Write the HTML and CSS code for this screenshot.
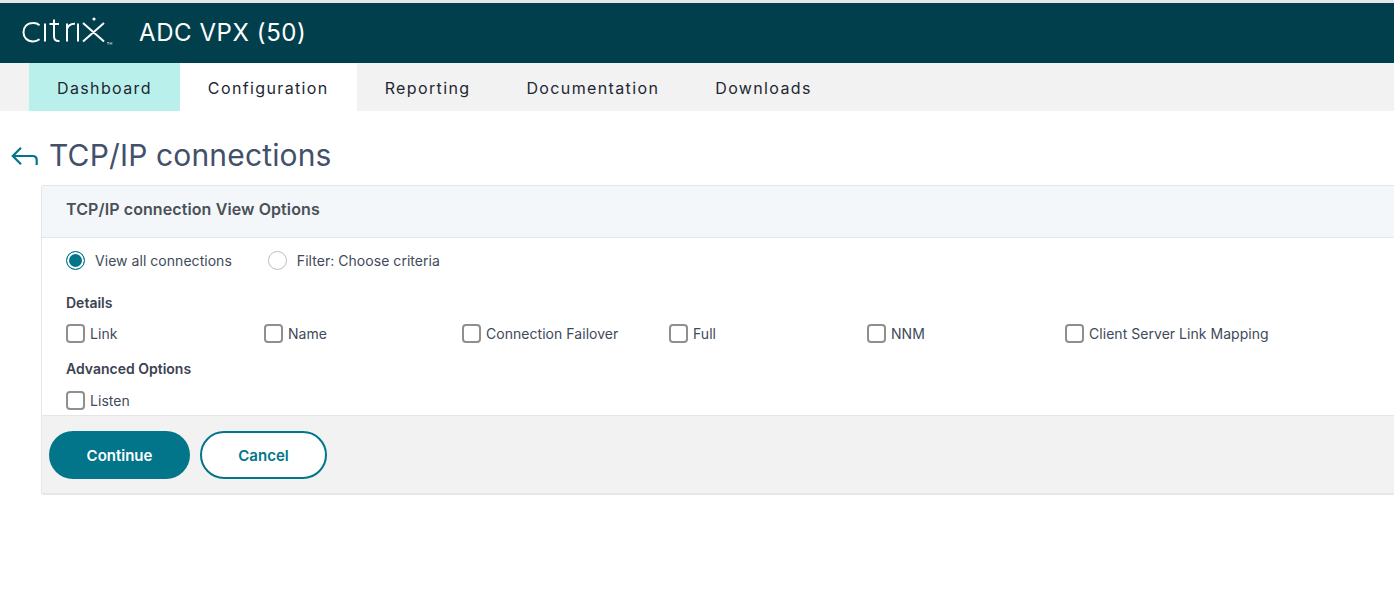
FILE: index.html
```html
<!DOCTYPE html>
<html lang="en">
<head>
<meta charset="utf-8">
<title>TCP/IP connections</title>
<link rel="stylesheet" href="styles.css">
</head>
<body>
<header class="topbar">
  <svg class="logo" width="92" height="34" viewBox="0 0 92 34" role="img" aria-label="Citrix" fill="none" stroke="#fff" stroke-width="2">
    <path d="M17.500 9.200A9 9 0 0 0 11 7C5 7 1.500 11 1.500 16.200S5 25.400 11 25.400c2.500 0 4.700-.8 6.500-2.200"/>
    <path d="M23 7.500V25.500M32 3.500V20c0 3.800 1.500 5.300 5.500 5M27.500 8H37M45 25.500V7.500M45 13c1.200-3.800 4-5.500 8-5.300M56 7.500V25.500M61 7 82 25.500M82 7 61 25.500"/>
    <circle cx="72" cy="3" r="1.600" fill="#fff" stroke="none"/>
    <path d="M85 26.500h2.200M86.100 26.500v2.200M88 28.700v-2.200l.9 1.300.9-1.300v2.200" stroke-width=".5"/>
  </svg>
  <span class="product">ADC VPX (50)</span>
</header>
<nav class="tabs">
  <a class="tab tab-active">Dashboard</a>
  <a class="tab tab-current">Configuration</a>
  <a class="tab">Reporting</a>
  <a class="tab">Documentation</a>
  <a class="tab">Downloads</a>
</nav>
<div class="title-row">
  <svg class="back" width="28" height="20" viewBox="0 0 28 20" fill="none" stroke="#02758a" stroke-width="2.200" aria-hidden="true">
    <path d="M11 1.800 2.800 10l8.200 8.200M3 10h19.500c2.800 0 4.200 1.300 4.200 4v5"/>
  </svg>
  <h1 class="title">TCP/IP connections</h1>
</div>
<section class="panel">
  <h2 class="panel-head">TCP/IP connection View Options</h2>
  <div class="panel-body">
    <div class="radios">
      <label class="opt radio-opt"><span class="radio radio-on"></span>View all connections</label>
      <label class="opt radio-opt"><span class="radio"></span>Filter: Choose criteria</label>
    </div>
    <h3 class="group">Details</h3>
    <div class="checks">
      <label class="opt"><span class="box"></span>Link</label>
      <label class="opt"><span class="box"></span>Name</label>
      <label class="opt"><span class="box"></span>Connection Failover</label>
      <label class="opt"><span class="box"></span>Full</label>
      <label class="opt"><span class="box"></span>NNM</label>
      <label class="opt"><span class="box"></span>Client Server Link Mapping</label>
    </div>
    <h3 class="group group-adv">Advanced Options</h3>
    <div class="checks checks-adv">
      <label class="opt"><span class="box"></span>Listen</label>
    </div>
  </div>
  <div class="panel-foot">
    <button class="btn btn-primary">Continue</button>
    <button class="btn btn-secondary">Cancel</button>
  </div>
</section>
</body>
</html>
```
FILE: styles.css
```css
* { box-sizing: border-box; }
html, body { margin: 0; height: 100%; overflow: hidden; }
body {
  background: #fff;
  font-family: Inter, "Noto Sans", "Liberation Sans", sans-serif;
  color: #414a5a;
  padding-top: 3px;
  position: relative;
}
body::before {
  content: "";
  position: absolute;
  top: 0; left: 0; right: 0;
  height: 3px;
  background: #e6e6e6;
}
.topbar {
  height: 60px;
  background: #023f4c;
  display: flex;
  align-items: center;
  padding-left: 22px;
}
.product {
  margin-left: 25px;
  margin-top: -2px;
  font-size: 24px;
  color: #fff;
  letter-spacing: .58px;
}
.tabs {
  height: 48px;
  background: #f2f2f2;
  display: flex;
  padding-left: 29px;
}
.tab {
  display: flex;
  align-items: center;
  padding: 1px 28px 0;
  font-size: 16px;
  letter-spacing: 1.37px;
  color: #222733;
}
.tab-active { background: #baf0ec; }
.tab-current { background: #fff; }
.title-row {
  display: flex;
  align-items: center;
  height: 74px;
  padding: 14px 0 0 10px;
}
.back { margin-top: 2px; }
.title {
  margin: 0 0 0 11px;
  font-size: 30px;
  font-weight: 400;
  letter-spacing: .15px;
  color: #43506a;
}
.panel {
  margin-left: 41px;
  height: 310px;
  border: 1px solid #e3e6ea;
  border-right: 0;
  border-bottom-width: 2px;
  border-radius: 3px 0 0 3px;
  display: flex;
  flex-direction: column;
}
.panel-head {
  margin: 0;
  height: 52px;
  padding: 0 0 6px 24px;
  display: flex;
  align-items: center;
  background: #f4f7fa;
  border-bottom: 1px solid #e3e6ea;
  font-size: 16px;
  font-weight: 600;
  letter-spacing: .1px;
  color: #4a4f58;
}
.panel-body { flex: 1; padding: 12px 24px 0; }
.radios { display: flex; gap: 36px; height: 20px; align-items: center; }
.opt {
  display: flex;
  align-items: center;
  font-size: 14px;
  letter-spacing: .04px;
  color: #414a5a;
}
.radio {
  width: 19px;
  height: 19px;
  border-radius: 50%;
  border: 1px solid #bdbdbd;
  margin-right: 10px;
  background: #fff;
}
.radio-on {
  border-color: #02758a;
  background: #02758a;
  box-shadow: inset 0 0 0 2px #fff;
}
.group {
  margin: 24px 0 0;
  height: 18px;
  font-size: 14px;
  line-height: 18px;
  font-weight: 600;
  color: #3b4252;
}
.group-adv { margin-top: 17px; }
.checks {
  display: grid;
  grid-template-columns: 198px 198px 207px 198px 198px auto;
  margin-top: 11px;
  height: 20px;
  align-items: center;
}
.checks-adv { margin-top: 12px; }
.box {
  width: 19px;
  height: 19px;
  border: 2px solid #8f8f8f;
  border-radius: 4px;
  margin-right: 5px;
  background: #fff;
}
.panel-foot {
  height: 78px;
  background: #f2f2f2;
  border-top: 1px solid #e3e6ea;
  display: flex;
  align-items: center;
  gap: 10px;
  padding-left: 7px;
}
.btn {
  height: 48px;
  border-radius: 24px;
  font-family: inherit;
  font-size: 15px;
  font-weight: 600;
  padding: 1px 0 0;
}
.btn-primary {
  width: 141px;
  background: #02758a;
  color: #fff;
  border: 0;
}
.btn-secondary {
  width: 127px;
  background: #fff;
  color: #02758a;
  border: 2px solid #02758a;
}
```
